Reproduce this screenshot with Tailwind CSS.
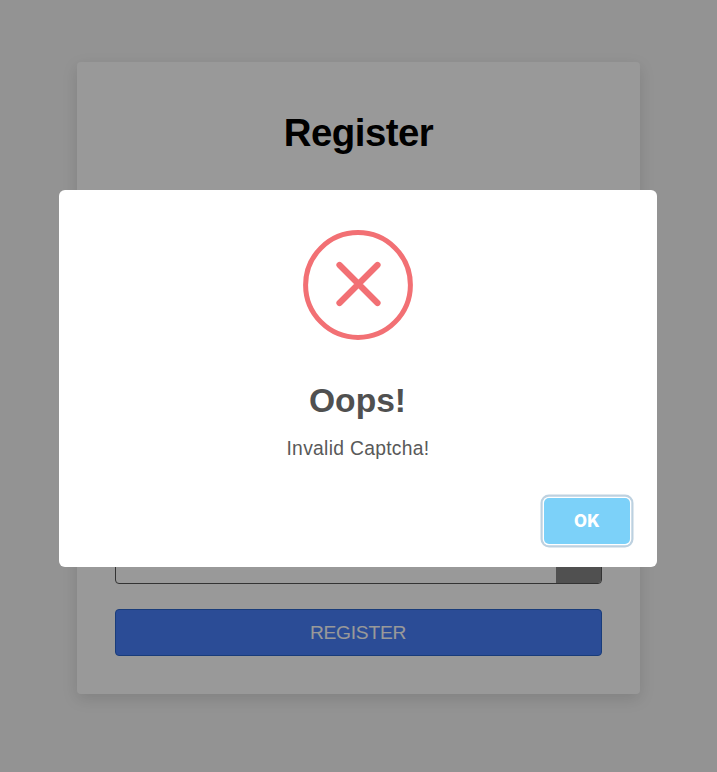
<!DOCTYPE html>
<html lang="en">
<head>
<meta charset="utf-8">
<title>Register</title>
<script src="https://cdn.jsdelivr.net/npm/@tailwindcss/browser@4"></script>
</head>
<body class="h-screen overflow-hidden bg-[#f5f5f5] font-['Liberation_Sans',Arial,sans-serif]">
<main class="flex h-[772px] w-[717px] pl-[77px] pt-[62px]">
  <form class="flex h-[632px] w-[563px] flex-col rounded-[4px] bg-white px-[38px] pb-[38px] pt-[48px] shadow-[0_5px_16px_rgba(0,0,0,0.12)]">
    <h1 class="text-center text-[38.4px] leading-[46px] font-bold tracking-[-0.5px] text-black">Register</h1>
    <div class="mt-auto flex h-[47px] shrink-0 overflow-hidden rounded-[4px] border border-[#555]">
      <input class="min-w-0 flex-1" aria-label="Captcha">
      <div class="w-[45px] bg-[#858585]"></div>
    </div>
    <button type="button" class="mt-[25px] h-[47px] shrink-0 rounded-[4px] border border-[#2b65cc] bg-[#497ffb] pt-px pr-px text-[19.2px] tracking-[-0.25px] text-white">REGISTER</button>
  </form>
</main>
<div class="fixed inset-0 bg-black/40 pl-[59px] pt-[190px]">
  <section role="dialog" class="flex h-[377px] w-[598px] flex-col items-center rounded-[6px] bg-white pt-[40px]">
    <svg class="h-[110px] w-[110px] shrink-0" viewBox="0 0 110 110" fill="none" stroke="#f27074" stroke-width="5">
      <circle cx="55" cy="55" r="52.4"/>
      <path d="M36.5 35L74.5 73M74.5 35L36.5 73" stroke-width="6.2" stroke-linecap="round"/>
    </svg>
    <h2 class="mt-[41px] mr-px text-[33.6px] leading-[40px] font-bold text-[#505050]">Oops!</h2>
    <p class="mt-[16px] text-[19.3px] leading-[24px] tracking-[0.3px] text-[#595959]">Invalid Captcha!</p>
    <button type="button" class="mr-[27px] mt-[37px] h-[46px] w-[86px] self-end rounded-[5px] bg-[#7cd1f9] pt-[2px] font-['Inter',sans-serif] text-[16.8px] font-extrabold tracking-[0.2px] text-white shadow-[0_0_0_1.3px_#fff,0_0_0_3.5px_#bdd1e0]">OK</button>
  </section>
</div>
</body>
</html>
